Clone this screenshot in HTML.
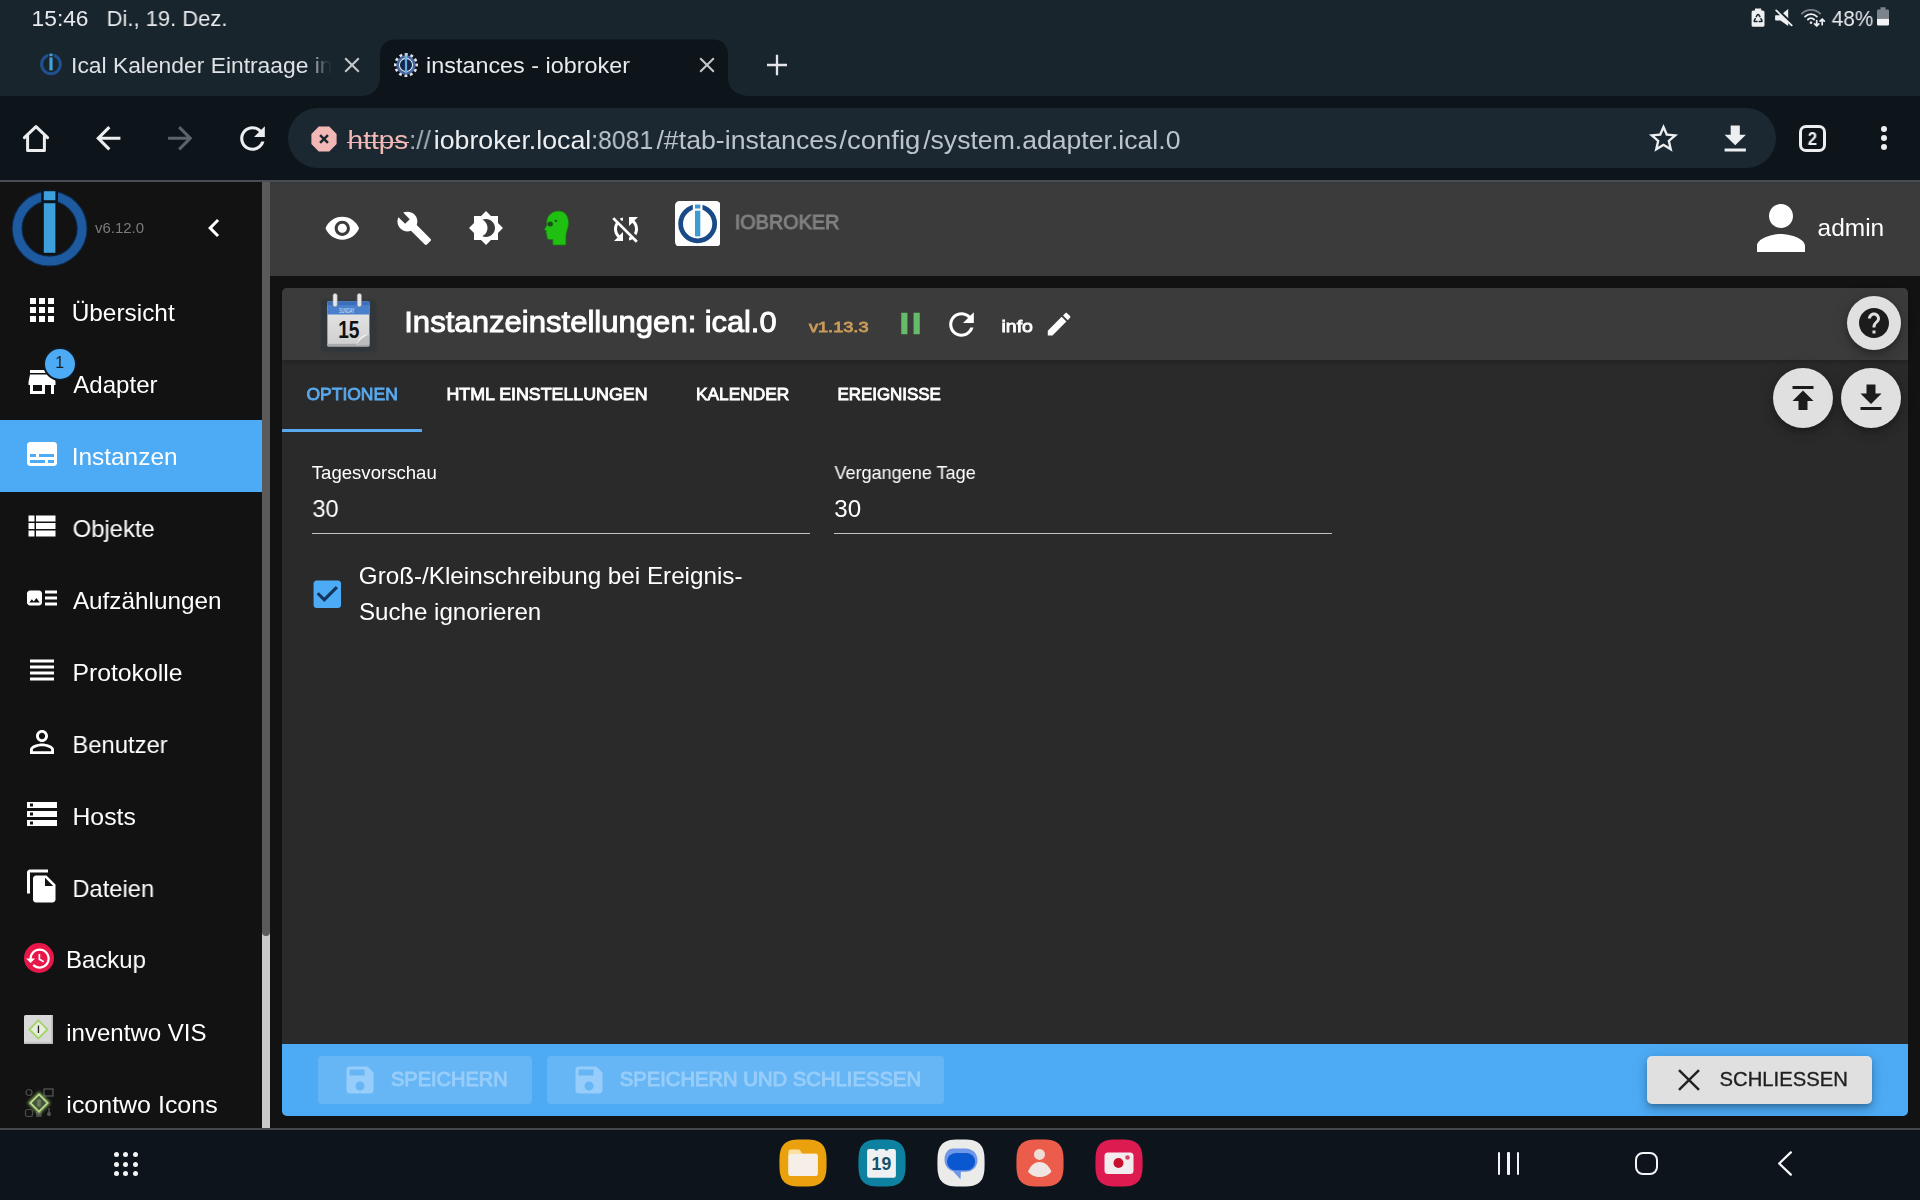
<!DOCTYPE html>
<html lang="de"><head><meta charset="utf-8"><title>instances - iobroker</title><style>
html,body{margin:0;padding:0;}
body{width:1920px;height:1200px;overflow:hidden;background:#121212;position:relative;font-family:"Liberation Sans",sans-serif;}
.t{position:absolute;white-space:pre;transform-origin:0 0;display:block;will-change:transform;}
.i,.b{position:absolute;display:block;}
</style></head>
<body>
<div class="b" style="left:0px;top:0px;width:1920px;height:96px;background:#19252c;"></div>
<div class="b" style="left:0px;top:96px;width:1920px;height:84px;background:#0d141a;"></div>
<div class="b" style="left:0px;top:180px;width:1920px;height:2px;background:#474d52;"></div>
<span class="t" style="left:31px;top:7.55px;font-size:22.5px;line-height:22.5px;color:#e8eaed;transform:translateX(0.60px) scaleX(1.0103);">15:46</span>
<span class="t" style="left:106px;top:7.55px;font-size:22.5px;line-height:22.5px;color:#e8eaed;transform:translateX(0.64px) scaleX(0.9760);">Di., 19. Dez.</span>
<span class="t" style="left:1831px;top:7.55px;font-size:22.5px;line-height:22.5px;color:#e8eaed;transform:translateX(0.71px) scaleX(0.9238);">48%</span>
<svg class="i" style="left:1875px;top:6px" width="16" height="21" viewBox="0 0 16 21"><path d="M5.5 1.3h5v2.2h2.2a1.3 1.3 0 0 1 1.3 1.3V12.8H2V4.8a1.3 1.3 0 0 1 1.3-1.3H5.5z" fill="#7d838a"/><path d="M2 12.8h12V18.2a1.3 1.3 0 0 1-1.3 1.3H3.3A1.3 1.3 0 0 1 2 18.2z" fill="#f1f3f4"/></svg>
<svg class="i" style="left:1750px;top:7px" width="16" height="21" viewBox="0 0 16 21"><path d="M5 1.400h6.200v2.200h1.700a1.600 1.600 0 0 1 1.600 1.600V18.200a1.600 1.600 0 0 1-1.600 1.600H3.200A1.600 1.600 0 0 1 1.600 18.200V5.200a1.600 1.600 0 0 1 1.600-1.600H5z" fill="#eef0f2"/><path d="M6.300 9.600L7.400 7.800a.85.85 0 0 1 1.400 0L9.900 9.600M5.300 11.700L4.200 13.600a.5.500 0 0 0 .4.800H7M10.900 11.700L12 13.600a.5.500 0 0 1-.4.800H9.200" stroke="#19252c" stroke-width="1.500" fill="none" stroke-linecap="round" stroke-linejoin="round"/></svg>
<svg class="i" style="left:1773px;top:7px" width="21" height="21" viewBox="0 0 21 21"><path d="M2.900 8.300H7.400L15.200 2.100V18.900L7.400 13.600H2.900a.8.800 0 0 1-.8-.8V9.100a.8.800 0 0 1 .8-.8z" fill="#eef0f2"/><path d="M4.500 2.400L20.200 17.600" stroke="#19252c" stroke-width="2.200"/><path d="M3.200 3.400L18.700 18.400" stroke="#eef0f2" stroke-width="1.800" stroke-linecap="round"/></svg>
<svg class="i" style="left:1800px;top:7px" width="26" height="21" viewBox="0 0 26 21" fill="none" stroke-linecap="round"><path d="M1.800 6.700A12.800 12.800 0 0 1 20.200 6.700" stroke="#7d838a" stroke-width="1.800"/><path d="M5.060 9.660A8.400 8.400 0 0 1 16.940 9.660" stroke="#eef0f2" stroke-width="1.800"/><path d="M7.900 12.500A4.400 4.400 0 0 1 14.100 12.500" stroke="#eef0f2" stroke-width="1.800"/><rect x="9.800" y="14.400" width="2.400" height="2.400" rx=".6" fill="#eef0f2"/><path d="M16.700 13.600v5.300m-2.100-2.100l2.100 2.100 2.100-2.100M22.200 17.700v-5.700m-2.100 2.100l2.100-2.100 2.100 2.100" stroke="#eef0f2" stroke-width="1.700" stroke-linejoin="round"/></svg>
<svg class="i" style="left:360px;top:38px" width="392" height="58" viewBox="0 0 392 58"><path d="M0 58 C14 58 20 50 20 38 V18 Q20 1.5 36 1.5 H352 Q368 1.5 368 18 V38 C368 50 374 58 392 58 Z" fill="#0d141a"/></svg>
<svg class="i" style="left:39px;top:52px" width="24" height="24" viewBox="0 0 24 24"><circle cx="12" cy="12.3" r="9.4" fill="none" stroke="#204f8f" stroke-width="3"/><rect x="9.4" y="0.8" width="5.2" height="5.4" fill="#19252c"/><rect x="10.4" y="1.6" width="3.2" height="2.6" fill="#459fd8"/><rect x="10.4" y="5.4" width="3.2" height="13" fill="#459fd8"/></svg>
<span class="t" style="left:71px;top:54.55px;font-size:22.5px;line-height:22.5px;color:#dfe2e5;transform:translateX(0.04px) scaleX(1.0149);-webkit-mask-image:linear-gradient(90deg,#000 0,#000 233px,rgba(0,0,0,.05) 254px);">Ical Kalender Eintraage in</span>
<svg class="i" style="left:342.5px;top:55.599999999999994px" width="18" height="18" viewBox="0 0 18 18"><path d="M2.2 2.2L15.8 15.8M15.8 2.2L2.2 15.8" stroke="#c4c7ca" stroke-width="2.1"/></svg>
<svg class="i" style="left:697.5px;top:55.599999999999994px" width="18" height="18" viewBox="0 0 18 18"><path d="M2.2 2.2L15.8 15.8M15.8 2.2L2.2 15.8" stroke="#c4c7ca" stroke-width="2.1"/></svg>
<svg class="i" style="left:393px;top:52px" width="26" height="26" viewBox="0 0 26 26"><circle cx="13" cy="13" r="10.400" fill="none" stroke="#dde4ee" stroke-width="3.200" stroke-dasharray="2.720 2.725" transform="rotate(-7.500 13 13)"/><circle cx="13" cy="13" r="8.400" fill="#10264a" stroke="#48669a" stroke-width="2.600"/><circle cx="13" cy="13" r="6.600" fill="none" stroke="#dbe6f4" stroke-width="1.100"/><rect x="11.700" y="1.400" width="2.600" height="4" fill="#a9c9e6"/><rect x="11.900" y="4.400" width="2.200" height="16.800" fill="#64abe2"/></svg>
<span class="t" style="left:426px;top:54.55px;font-size:22.5px;line-height:22.5px;color:#e8eaed;transform:translateX(0.05px) scaleX(1.0388);">instances - iobroker</span>
<svg class="i" style="left:765px;top:52.600px" width="24" height="24" viewBox="0 0 24 24"><path d="M12 1.800V22.200M2 12H22" stroke="#e3e5e8" stroke-width="2.300"/></svg>
<svg class="i" style="left:18px;top:120px" width="36" height="36" viewBox="0 0 36 36"><path d="M6.4 17.6L18 6.6 29.6 17.6M9.6 15.4V30.4H26.4V15.4" fill="none" stroke="#eceef0" stroke-width="3" stroke-linejoin="round" stroke-linecap="round"/></svg>
<svg class="i" style="left:89.75px;top:119.75px;" width="36.5" height="36.5" viewBox="0 0 24 24" fill="#eceef0"><path d="M20 11H7.83l5.59-5.59L12 4l-8 8 8 8 1.41-1.41L7.83 13H20v-2z"/></svg>
<svg class="i" style="left:161.75px;top:119.75px;" width="36.5" height="36.5" viewBox="0 0 24 24" fill="#5c636b"><path d="M12 4l-1.41 1.41L16.17 11H4v2h12.17l-5.58 5.59L12 20l8-8z"/></svg>
<svg class="i" style="left:233.80px;top:120.10px;" width="37" height="37" viewBox="0 0 24 24" fill="#eceef0"><path d="M17.65 6.35C16.2 4.9 14.21 4 12 4c-4.42 0-7.99 3.58-7.99 8s3.57 8 7.99 8c3.73 0 6.84-2.55 7.73-6h-2.08c-.82 2.33-3.04 4-5.65 4-3.31 0-6-2.69-6-6s2.69-6 6-6c1.66 0 3.14.69 4.22 1.78L13 11h7V4l-2.35 2.35z"/></svg>
<div class="b" style="left:288px;top:108px;width:1488px;height:60px;background:#1b2831;border-radius:30px;"></div>
<svg class="i" style="left:311px;top:125.500px" width="26" height="26" viewBox="0 0 27 27"><path d="M8.6 1.2H18.4L25.8 8.6V18.4L18.4 25.8H8.6L1.2 18.4V8.6Z" fill="#f2b8b5" stroke="#f2b8b5" stroke-width="1.6" stroke-linejoin="round"/><path d="M9.4 9.4L17.6 17.6M17.6 9.4L9.4 17.6" stroke="#1b2831" stroke-width="2.6"/></svg>
<span class="t" style="left:347px;top:127.05px;font-size:26.5px;line-height:26.5px;color:#f2b8b5;transform:translateX(0.58px) scaleX(1.0548);">https</span>
<div class="b" style="left:347.4px;top:141.6px;width:61.4px;height:1.8px;background:#f2b8b5;"></div>
<span class="t" style="left:409px;top:127.05px;font-size:26.5px;line-height:26.5px;color:#a9afb5;transform:translateX(0.08px) scaleX(0.9822);">://</span>
<span class="t" style="left:433px;top:127.05px;font-size:26.5px;line-height:26.5px;color:#eceef0;transform:translateX(0.71px) scaleX(1.0089);">iobroker.local</span>
<span class="t" style="left:591px;top:127.05px;font-size:26.5px;line-height:26.5px;color:#bcc3ca;transform:translateX(0.20px) scaleX(0.9373);">:8081</span>
<span class="t" style="left:656px;top:127.05px;font-size:26.5px;line-height:26.5px;color:#bcc3ca;transform:translateX(0.46px) scaleX(1.0071);">/#tab-instances</span>
<span class="t" style="left:839px;top:127.05px;font-size:26.5px;line-height:26.5px;color:#bcc3ca;transform:translateX(0.36px) scaleX(1.0373);">/config</span>
<span class="t" style="left:923px;top:127.05px;font-size:26.5px;line-height:26.5px;color:#bcc3ca;transform:translateX(0.16px) scaleX(1.0038);">/system.adapter.ical.0</span>
<svg class="i" style="left:1645.50px;top:121.10px;" width="35" height="35" viewBox="0 0 24 24" fill="#eceef0"><path d="M22 9.24l-7.19-.62L12 2 9.19 8.63 2 9.24l5.46 4.73L5.82 21 12 17.27 18.18 21l-1.63-7.03L22 9.24zM12 15.4l-3.76 2.27 1-4.28-3.32-2.88 4.38-.38L12 6.1l1.71 4.04 4.38.38-3.32 2.88 1 4.28L12 15.4z"/></svg>
<svg class="i" style="left:1716.75px;top:121.05px;" width="36.5" height="36.5" viewBox="0 0 24 24" fill="#eceef0"><path d="M19 9h-4V3H9v6H5l7 7 7-7zM5 18v2h14v-2H5z"/></svg>
<div class="b" style="left:1799px;top:125px;width:21px;height:21px;border:3px solid #eceef0;border-radius:7px;"></div>
<span class="t" style="left:1807px;top:130.55px;font-size:17.5px;line-height:17.5px;color:#eceef0;transform:translateX(0.73px) scaleX(0.9648);font-weight:bold;">2</span>
<div class="b" style="left:1880.8px;top:125.8px;width:6.4px;height:6.4px;border-radius:50%;background:#eceef0;"></div>
<div class="b" style="left:1880.8px;top:135.0px;width:6.4px;height:6.4px;border-radius:50%;background:#eceef0;"></div>
<div class="b" style="left:1880.8px;top:144.10000000000002px;width:6.4px;height:6.4px;border-radius:50%;background:#eceef0;"></div>
<div class="b" style="left:0px;top:182px;width:262px;height:946px;background:#121212;"></div>
<div class="b" style="left:262px;top:182px;width:7.7px;height:946px;background:#c9c9c9;"></div>
<div class="b" style="left:262px;top:182px;width:7.7px;height:754px;background:#5a5a5a;border-radius:0 0 4px 4px;"></div>
<svg class="i" style="left:9px;top:188px" width="82" height="82" viewBox="0 0 82 82"><circle cx="40.600" cy="40.600" r="32.500" fill="none" stroke="#0d2a4e" stroke-width="11"/><circle cx="40.600" cy="40.600" r="32.500" fill="none" stroke="#1e5a9f" stroke-width="8.800"/><rect x="32.200" y="1" width="16.800" height="15.400" fill="#0c141c"/><rect x="34.8" y="3.2" width="11.6" height="9" fill="#3d9fdc"/><rect x="34.8" y="15.2" width="11.6" height="49.6" fill="#3d9fdc"/></svg>
<span class="t" style="left:95px;top:220.90px;font-size:14.8px;line-height:14.8px;color:#7b7b7b;transform:translateX(0.01px) scaleX(1.0098);">v6.12.0</span>
<svg class="i" style="left:196.00px;top:210.00px;" width="36" height="36" viewBox="0 0 24 24" fill="#ffffff"><path d="M15.41 7.41L14 6l-6 6 6 6 1.41-1.41L10.83 12z"/></svg>
<div class="b" style="left:0px;top:420px;width:262px;height:72px;background:#4dabf5;"></div>
<svg class="i" style="left:24.00px;top:292.00px;" width="36" height="36" viewBox="0 0 24 24" fill="#ffffff"><path d="M4 8h4V4H4v4zm6 12h4v-4h-4v4zm-6 0h4v-4H4v4zm0-6h4v-4H4v4zm6 0h4v-4h-4v4zm6-10v4h4V4h-4zm-6 4h4V4h-4v4zm6 6h4v-4h-4v4zm0 6h4v-4h-4v4z"/></svg>
<span class="t" style="left:71px;top:300.80px;font-size:24px;line-height:24px;color:#ffffff;transform:translateX(0.68px) scaleX(1.0160);">Übersicht</span>
<svg class="i" style="left:24.00px;top:364.00px;" width="36" height="36" viewBox="0 0 24 24" fill="#ffffff"><path d="M20 4H4v2h16V4zm1 10v-2l-1-5H4l-1 5v2h1v6h10v-6h4v6h2v-6h1zm-9 4H6v-4h6v4z"/></svg>
<span class="t" style="left:73px;top:372.80px;font-size:24px;line-height:24px;color:#ffffff;transform:translateX(0.25px) scaleX(1.0033);">Adapter</span>
<svg class="i" style="left:24.00px;top:436.00px;" width="36" height="36" viewBox="0 0 24 24" fill="#ffffff"><path d="M20 4H4c-1.1 0-2 .9-2 2v12c0 1.1.9 2 2 2h16c1.1 0 2-.9 2-2V6c0-1.1-.9-2-2-2zM4 12h4v2H4v-2zm10 6H4v-2h10v2zm6 0h-4v-2h4v2zm0-4H10v-2h10v2z"/></svg>
<span class="t" style="left:71px;top:444.80px;font-size:24px;line-height:24px;color:#ffffff;transform:translateX(0.69px) scaleX(1.0172);">Instanzen</span>
<svg class="i" style="left:24.00px;top:508.00px;" width="36" height="36" viewBox="0 0 24 24" fill="#ffffff"><path d="M3 14h4v-4H3v4zm0 5h4v-4H3v4zM3 9h4V5H3v4zm5 5h13v-4H8v4zm0 5h13v-4H8v4zM8 5v4h13V5H8z"/></svg>
<span class="t" style="left:72px;top:516.80px;font-size:24px;line-height:24px;color:#ffffff;transform:translateX(0.62px) scaleX(0.9935);">Objekte</span>
<svg class="i" style="left:24.00px;top:580.00px;" width="36" height="36" viewBox="0 0 24 24" fill="#ffffff"><path d="M22 13h-8v-2h8v2zm0-6h-8v2h8V7zm-8 10h8v-2h-8v2zm-2-8v6c0 1.1-.9 2-2 2H4c-1.1 0-2-.9-2-2V9c0-1.1.9-2 2-2h6c1.1 0 2 .9 2 2zm-1.5 6l-2.25-3-1.75 2.26-1.25-1.51L3.5 15h7z"/></svg>
<span class="t" style="left:72px;top:588.80px;font-size:24px;line-height:24px;color:#ffffff;transform:translateX(0.91px) scaleX(1.0116);">Aufzählungen</span>
<svg class="i" style="left:24.00px;top:652.00px;" width="36" height="36" viewBox="0 0 24 24" fill="#ffffff"><path d="M4 15h16v-2H4v2zm0 4h16v-2H4v2zm0-8h16V9H4v2zm0-6v2h16V5H4z"/></svg>
<span class="t" style="left:72px;top:660.80px;font-size:24px;line-height:24px;color:#ffffff;transform:translateX(0.48px) scaleX(1.0306);">Protokolle</span>
<svg class="i" style="left:24.00px;top:724.00px;" width="36" height="36" viewBox="0 0 24 24" fill="#ffffff"><path d="M12 5.9c1.16 0 2.1.94 2.1 2.1s-.94 2.1-2.1 2.1S9.9 9.16 9.9 8s.94-2.1 2.1-2.1m0 9c2.97 0 6.1 1.46 6.1 2.1v1.1H5.9V17c0-.64 3.13-2.1 6.1-2.1M12 4C9.79 4 8 5.79 8 8s1.79 4 4 4 4-1.79 4-4-1.79-4-4-4zm0 9c-2.67 0-8 1.34-8 4v3h16v-3c0-2.66-5.33-4-8-4z"/></svg>
<span class="t" style="left:72px;top:732.80px;font-size:24px;line-height:24px;color:#ffffff;transform:translateX(0.41px) scaleX(0.9918);">Benutzer</span>
<svg class="i" style="left:24.00px;top:796.00px;" width="36" height="36" viewBox="0 0 24 24" fill="#ffffff"><path d="M2 20h20v-4H2v4zm2-3h2v2H4v-2zM2 4v4h20V4H2zm4 3H4V5h2v2zm-4 7h20v-4H2v4zm2-3h2v2H4v-2z"/></svg>
<span class="t" style="left:72px;top:804.80px;font-size:24px;line-height:24px;color:#ffffff;transform:translateX(0.46px) scaleX(1.0326);">Hosts</span>
<svg class="i" style="left:24.00px;top:868.00px;" width="36" height="36" viewBox="0 0 24 24" fill="#ffffff"><path d="M16 1H4c-1.1 0-2 .9-2 2v14h2V3h12V1zm-1 4l6 6v10c0 1.1-.9 2-2 2H7.99C6.89 23 6 22.1 6 21l.01-14c0-1.1.89-2 1.99-2h7zm-1 7h5.5L14 6.5V12z"/></svg>
<span class="t" style="left:72px;top:876.80px;font-size:24px;line-height:24px;color:#ffffff;transform:translateX(0.42px) scaleX(0.9868);">Dateien</span>
<div class="b" style="left:44.8px;top:349px;width:30px;height:30px;border-radius:50%;background:#4dabf5;box-shadow:0 0 0 2px #101820;"></div>
<span class="t" style="left:55px;top:354.50px;font-size:16.6px;line-height:16.6px;color:#14202b;transform:translateX(0.24px) scaleX(0.9512);">1</span>
<div class="b" style="left:24px;top:943px;width:30px;height:30px;border-radius:50%;background:#e8174a;"></div>
<svg class="i" style="left:24.90px;top:944.50px;" width="27" height="27" viewBox="0 0 24 24" fill="#ffffff"><path d="M13 3c-4.97 0-9 4.03-9 9H1l3.89 3.89.07.14L9 12H6c0-3.87 3.13-7 7-7s7 3.13 7 7-3.13 7-7 7c-1.93 0-3.68-.79-4.94-2.06l-1.42 1.42C8.27 19.99 10.51 21 13 21c4.97 0 9-4.03 9-9s-4.03-9-9-9zm-1 5v5l4.28 2.54.72-1.21-3.5-2.08V8H12z"/></svg>
<span class="t" style="left:65px;top:947.80px;font-size:24px;line-height:24px;color:#ffffff;transform:translateX(0.96px) scaleX(0.9987);">Backup</span>
<svg class="i" style="left:24px;top:1015px" width="29" height="29" viewBox="0 0 29 29"><rect width="29" height="29" rx="1.5" fill="#d9d9d9"/><rect x="27.4" width="1.6" height="29" fill="#b9b9b9"/><rect y="27.4" width="29" height="1.6" fill="#b9b9b9"/><path d="M14.4 5.4L23.4 14.4 14.4 23.4 5.4 14.4Z" fill="#e6eedb" stroke="#a6d36d" stroke-width="2"/><rect x="13.8" y="10.6" width="1.3" height="7.4" fill="#222"/></svg>
<span class="t" style="left:66px;top:1020.80px;font-size:24px;line-height:24px;color:#ffffff;transform:translateX(0.23px) scaleX(1.0017);">inventwo VIS</span>
<svg class="i" style="left:24px;top:1088px" width="30" height="30" viewBox="0 0 30 30"><defs><filter id="gl" x="-30%" y="-30%" width="160%" height="160%"><feGaussianBlur stdDeviation="1.500"/></filter></defs><rect x="20" y="1" width="9" height="7" fill="none" stroke="#5a5a5a" stroke-width="1.200"/><circle cx="5" cy="4.500" r="3" fill="none" stroke="#4c4c4c" stroke-width="1.200"/><rect x="1.500" y="21.500" width="7" height="7" rx="2" fill="none" stroke="#4c4c4c" stroke-width="1.200"/><rect x="12" y="24" width="5.600" height="5" fill="#444"/><circle cx="25" cy="26" r="2" fill="#555"/><rect x="24.300" y="20" width="1.400" height="5" fill="#555"/><path d="M15 3.400L26.600 15 15 26.600 3.400 15Z" fill="#8fb060" filter="url(#gl)" opacity=".9"/><path d="M15 6.400L23.600 15 15 23.600 6.400 15Z" fill="#46543a" stroke="#b5d98a" stroke-width="1.800"/><rect x="13.200" y="11.400" width="3.600" height="7.200" fill="#6f7d64"/></svg>
<span class="t" style="left:66px;top:1092.80px;font-size:24px;line-height:24px;color:#ffffff;transform:translateX(0.34px) scaleX(1.0404);">icontwo Icons</span>
<div class="b" style="left:270px;top:182px;width:1650px;height:94px;background:#3b3b3b;"></div>
<div class="b" style="left:270px;top:276px;width:1650px;height:852px;background:#121212;"></div>
<div class="b" style="left:270px;top:182px;width:1650px;height:2.4px;background:linear-gradient(#33383c,#3b3b3b);"></div>
<svg class="i" style="left:323.50px;top:209.50px;" width="36.6" height="36.6" viewBox="0 0 24 24" fill="#ffffff"><path d="M12 4.5C7 4.5 2.73 7.61 1 12c1.73 4.39 6 7.5 11 7.5s9.27-3.11 11-7.5c-1.73-4.39-6-7.5-11-7.5zM12 17c-2.76 0-5-2.24-5-5s2.24-5 5-5 5 2.24 5 5-2.24 5-5 5zm0-8c-1.66 0-3 1.34-3 3s1.34 3 3 3 3-1.34 3-3-1.34-3-3-3z"/></svg>
<svg class="i" style="left:395.50px;top:209.50px;" width="36.6" height="36.6" viewBox="0 0 24 24" fill="#ffffff"><path d="M22.7 19l-9.1-9.1c.9-2.3.4-5-1.5-6.9-2-2-5-2.4-7.4-1.3L9 6 6 9 1.6 4.7C.4 7.1.9 10.1 2.9 12.1c1.9 1.9 4.6 2.4 6.9 1.5l9.1 9.1c.4.4 1 .4 1.4 0l2.3-2.3c.5-.4.5-1.1.1-1.4z"/></svg>
<svg class="i" style="left:467.90px;top:209.80px;" width="36" height="36" viewBox="0 0 24 24" fill="#ffffff"><path d="M20 8.69V4h-4.69L12 .69 8.69 4H4v4.69L.69 12 4 15.31V20h4.69L12 23.31 15.31 20H20v-4.69L23.31 12 20 8.69zM12 18c-.89 0-1.74-.2-2.5-.55C11.56 16.5 13 14.42 13 12s-1.44-4.5-3.5-5.45C10.26 6.2 11.11 6 12 6c3.31 0 6 2.69 6 6s-2.69 6-6 6z"/></svg>
<svg class="i" style="left:541px;top:209px" width="32" height="38" viewBox="0 0 32 38"><path d="M17.500 2C23.500 2 27.500 6.500 27.500 13.500C27.500 19 25.500 22 25 26C24.800 29 24.900 33 24.900 36H11.900V30.500C9.500 30.800 7 30.500 6.300 29.500C5.800 28.600 6.200 27.400 6 26.400L5.200 25.600 5.800 24.400 5 23.600 5.600 22.400 3.600 20.600C3.400 19.600 5.400 17.800 6 16C5.600 13 5.600 11 6.600 9C8.400 5 12.500 2 17.500 2Z" fill="#1fc012" stroke="#15800e" stroke-width=".7"/><ellipse cx="9.200" cy="15" rx="2.700" ry="2.500" fill="#1d4d18"/><ellipse cx="14.900" cy="11.800" rx="1.500" ry="1.100" fill="#0f5a0c"/></svg>
<svg class="i" style="left:608.00px;top:210.80px;" width="36" height="36" viewBox="0 0 24 24" fill="#ffffff"><path d="M10 6.35V4.26c-.8.21-1.55.54-2.23.96l1.46 1.46c.25-.12.5-.24.77-.33zm-7.14-.94l2.36 2.36C4.45 8.99 4 10.44 4 12c0 2.21.91 4.2 2.36 5.64L4 20h6v-6l-2.24 2.24C6.68 15.15 6 13.66 6 12c0-1 .25-1.94.68-2.77l8.08 8.08c-.25.13-.5.25-.77.34v2.09c.8-.21 1.55-.54 2.23-.96l2.36 2.36 1.27-1.27L4.14 4.14 2.86 5.41zM20 4h-6v6l2.24-2.24C17.32 8.85 18 10.34 18 12c0 1-.25 1.94-.68 2.77l1.46 1.46C19.55 15.01 20 13.56 20 12c0-2.21-.91-4.2-2.36-5.64L20 4z"/></svg>
<svg class="i" style="left:674.700px;top:200.700px" width="45.500" height="45.500" viewBox="0 0 46 46"><rect width="46" height="46" rx="4.5" fill="#fdfdfd"/><circle cx="22.900" cy="23" r="17.200" fill="none" stroke="#174a86" stroke-width="4.800"/><rect x="18" y="2" width="9.800" height="8" fill="#fdfdfd"/><rect x="20.200" y="3.600" width="5.400" height="4" fill="#3d9bd4"/><rect x="18.800" y="9.200" width="8.200" height="27.400" fill="#ffffff"/><rect x="20.200" y="9.800" width="5.400" height="26" fill="#3d9bd4"/></svg>
<span class="t" style="left:734px;top:212.20px;font-size:20.2px;line-height:20.2px;color:#808080;transform:translateX(0.83px) scaleX(0.9808);-webkit-text-stroke:1.0px #808080;">IOBROKER</span>
<svg class="i" style="left:1745.00px;top:192.00px;" width="72" height="72" viewBox="0 0 24 24" fill="#ffffff"><path d="M12 12c2.21 0 4-1.79 4-4s-1.79-4-4-4-4 1.79-4 4 1.79 4 4 4zm0 2c-2.67 0-8 1.34-8 4v2h16v-2c0-2.66-5.33-4-8-4z"/></svg>
<span class="t" style="left:1817px;top:215.60px;font-size:24.4px;line-height:24.4px;color:#ffffff;transform:translateX(0.57px) scaleX(1.0030);">admin</span>
<div class="b" style="left:282px;top:288px;width:1626px;height:828px;background:#2a2a2a;border-radius:5px;"></div>
<div class="b" style="left:282px;top:288px;width:1626px;height:72px;background:#3b3b3b;border-radius:5px 5px 0 0;box-shadow:0 2px 4px rgba(0,0,0,.22);"></div>
<div class="b" style="left:322px;top:300.5px;width:53px;height:50.5px;background:#31363b;border-radius:3px;box-shadow:0 0 2.500px 1px #31363b;"></div>
<svg class="i" style="left:325.900px;top:292.300px" width="44.600" height="56.200" viewBox="0 0 46 57" preserveAspectRatio="none"><defs><linearGradient id="cg" x1="0" y1="0" x2="0" y2="1"><stop offset="0" stop-color="#e9e9e9"/><stop offset="1" stop-color="#cfcfcf"/></linearGradient></defs><rect x="1.400" y="9.600" width="43.400" height="45.600" rx="1.500" fill="url(#cg)"/><rect x="1.400" y="52.600" width="43.400" height="2.600" fill="#a9a9a9"/><path d="M1.400 11.100a1.500 1.500 0 0 1 1.500-1.500h40.400a1.500 1.500 0 0 1 1.500 1.500v11.700H1.400z" fill="#4a7fcb"/><rect x="1.400" y="9.600" width="43.400" height="3.600" fill="#3c6db8"/><path d="M31 54.200C33 47 38 43 44.800 42.600V52a1.500 1.500 0 0 1-1.500 1.500z" fill="#bdbdbd"/><path d="M31 54.200C34 49 38 45.800 44.800 42.600 39 43 34 45 31 54.200z" fill="#f2f2f2"/><rect x="7.200" y="1.400" width="4.400" height="13.600" rx="2.200" fill="#e8e8e8" stroke="#8c8c8c" stroke-width=".6"/><rect x="32.200" y="1.400" width="4.400" height="13.600" rx="2.200" fill="#e8e8e8" stroke="#8c8c8c" stroke-width=".6"/><text x="21.400" y="21" font-family="Liberation Sans" font-size="7.400" fill="#d9e6f7" text-anchor="middle" textLength="16" lengthAdjust="spacingAndGlyphs">SUNDAY</text><text x="23.600" y="46.400" font-family="Liberation Sans" font-weight="bold" font-size="24" fill="#111" text-anchor="middle" textLength="22" lengthAdjust="spacingAndGlyphs">15</text></svg>
<span class="t" style="left:404px;top:307.05px;font-size:29.5px;line-height:29.5px;color:#ffffff;transform:translateX(0.23px) scaleX(1.0539);-webkit-text-stroke:0.95px #ffffff;">Instanzeinstellungen:</span>
<span class="t" style="left:704px;top:307.05px;font-size:29.5px;line-height:29.5px;color:#ffffff;transform:translateX(0.68px) scaleX(1.0427);-webkit-text-stroke:0.95px #ffffff;">ical.0</span>
<span class="t" style="left:808px;top:319.20px;font-size:15.2px;line-height:15.2px;color:#c99b5a;transform:translateX(0.90px) scaleX(1.1968);-webkit-text-stroke:0.8px #c99b5a;">v1.13.3</span>
<svg class="i" style="left:891.70px;top:305.30px;" width="37" height="37" viewBox="0 0 24 24" fill="#66bb6a"><path d="M6 19h4V5H6v14zm8-14v14h4V5h-4z"/></svg>
<svg class="i" style="left:942.70px;top:305.50px;" width="37" height="37" viewBox="0 0 24 24" fill="#ffffff"><path d="M17.65 6.35C16.2 4.9 14.21 4 12 4c-4.42 0-7.99 3.58-7.99 8s3.57 8 7.99 8c3.73 0 6.84-2.55 7.73-6h-2.08c-.82 2.33-3.04 4-5.65 4-3.31 0-6-2.69-6-6s2.69-6 6-6c1.66 0 3.14.69 4.22 1.78L13 11h7V4l-2.35 2.35z"/></svg>
<span class="t" style="left:1001px;top:317.60px;font-size:17.4px;line-height:17.4px;color:#ffffff;transform:translateX(0.42px) scaleX(1.1261);-webkit-text-stroke:0.85px #ffffff;">info</span>
<svg class="i" style="left:1044.00px;top:309.20px;" width="30.2" height="30.2" viewBox="0 0 24 24" fill="#ffffff"><path d="M3 17.25V21h3.75L17.81 9.94l-3.75-3.75L3 17.25zM20.71 7.04c.39-.39.39-1.02 0-1.41l-2.34-2.34c-.39-.39-1.02-.39-1.41 0l-1.83 1.83 3.75 3.75 1.83-1.83z"/></svg>
<div class="b" style="left:1847px;top:296px;width:54px;height:54px;background:#e0e0e0;box-shadow:0 3px 5px -1px rgba(0,0,0,.2),0 6px 10px rgba(0,0,0,.14),0 1px 18px rgba(0,0,0,.12);border-radius:50%;"></div>
<svg class="i" style="left:1856.00px;top:305.00px;" width="36" height="36" viewBox="0 0 24 24" fill="#1c1c1c"><path d="M12 2C6.48 2 2 6.48 2 12s4.48 10 10 10 10-4.48 10-10S17.52 2 12 2zm1 17h-2v-2h2v2zm2.07-7.75l-.9.92C13.45 12.9 13 13.5 13 15h-2v-.5c0-1.1.45-2.1 1.17-2.83l1.24-1.26c.37-.36.59-.86.59-1.41 0-1.1-.9-2-2-2s-2 .9-2 2H8c0-2.21 1.79-4 4-4s4 1.79 4 4c0 .88-.36 1.68-.93 2.25z"/></svg>
<div class="b" style="left:1773px;top:368px;width:60px;height:60px;background:#e0e0e0;box-shadow:0 3px 5px -1px rgba(0,0,0,.2),0 6px 10px rgba(0,0,0,.14),0 1px 18px rgba(0,0,0,.12);border-radius:50%;"></div>
<svg class="i" style="left:1785.00px;top:380.00px;" width="36" height="36" viewBox="0 0 24 24" fill="#1c1c1c"><path d="M5 4v2h14V4H5zm0 10h4v6h6v-6h4l-7-7-7 7z"/></svg>
<div class="b" style="left:1841px;top:368px;width:60px;height:60px;background:#e0e0e0;box-shadow:0 3px 5px -1px rgba(0,0,0,.2),0 6px 10px rgba(0,0,0,.14),0 1px 18px rgba(0,0,0,.12);border-radius:50%;"></div>
<svg class="i" style="left:1853.00px;top:380.00px;" width="36" height="36" viewBox="0 0 24 24" fill="#1c1c1c"><path d="M19 9h-4V3H9v6H5l7 7 7-7zM5 18v2h14v-2H5z"/></svg>
<span class="t" style="left:306px;top:387.35px;font-size:16.9px;line-height:16.9px;color:#5aa9ee;transform:translateX(0.45px) scaleX(1.0353);-webkit-text-stroke:0.85px #5aa9ee;">OPTIONEN</span>
<span class="t" style="left:446px;top:387.35px;font-size:16.9px;line-height:16.9px;color:#ffffff;transform:translateX(0.40px) scaleX(1.0541);-webkit-text-stroke:0.85px #ffffff;">HTML EINSTELLUNGEN</span>
<span class="t" style="left:695px;top:387.35px;font-size:16.9px;line-height:16.9px;color:#ffffff;transform:translateX(0.98px) scaleX(1.0235);-webkit-text-stroke:0.85px #ffffff;">KALENDER</span>
<span class="t" style="left:837px;top:387.35px;font-size:16.9px;line-height:16.9px;color:#ffffff;transform:translateX(0.40px) scaleX(1.0015);-webkit-text-stroke:0.85px #ffffff;">EREIGNISSE</span>
<div class="b" style="left:282px;top:428.5px;width:140px;height:3.5px;background:#5aa9ee;"></div>
<span class="t" style="left:311px;top:463.60px;font-size:18.4px;line-height:18.4px;color:#ffffff;transform:translateX(0.78px) scaleX(1.0104);">Tagesvorschau</span>
<span class="t" style="left:834px;top:463.60px;font-size:18.4px;line-height:18.4px;color:#ffffff;transform:translateX(0.53px) scaleX(0.9806);">Vergangene Tage</span>
<span class="t" style="left:312px;top:496.80px;font-size:24px;line-height:24px;color:#ffffff;transform:translateX(0.44px) scaleX(0.9839);">30</span>
<span class="t" style="left:834px;top:496.80px;font-size:24px;line-height:24px;color:#ffffff;transform:translateX(0.25px) scaleX(1.0068);">30</span>
<div class="b" style="left:312px;top:532.6px;width:498px;height:1.4px;background:#c2c2c2;"></div>
<div class="b" style="left:834px;top:532.6px;width:498px;height:1.4px;background:#c2c2c2;"></div>
<div class="b" style="left:315px;top:582px;width:24px;height:24px;background:#11355c;"></div>
<svg class="i" style="left:308.70px;top:575.70px;" width="36.6" height="36.6" viewBox="0 0 24 24" fill="#4dabf5"><path d="M19 3H5c-1.11 0-2 .9-2 2v14c0 1.1.89 2 2 2h14c1.11 0 2-.9 2-2V5c0-1.1-.89-2-2-2zm-9 14l-5-5 1.41-1.41L10 14.17l7.59-7.59L19 8l-9 9z"/></svg>
<span class="t" style="left:358px;top:563.80px;font-size:24px;line-height:24px;color:#ffffff;transform:translateX(0.79px) scaleX(1.0093);">Groß-/Kleinschreibung bei Ereignis-</span>
<span class="t" style="left:358px;top:599.80px;font-size:24px;line-height:24px;color:#ffffff;transform:translateX(0.96px) scaleX(1.0048);">Suche ignorieren</span>
<div class="b" style="left:282px;top:1044px;width:1626px;height:72px;background:#4dabf5;border-radius:0 0 5px 5px;"></div>
<div class="b" style="left:318px;top:1056px;width:214px;height:48px;background:#66b5f5;border-radius:4px;"></div>
<svg class="i" style="left:341.80px;top:1062.30px;" width="36" height="36" viewBox="0 0 24 24" fill="#97cdfa"><path d="M17 3H5c-1.11 0-2 .9-2 2v14c0 1.1.89 2 2 2h14c1.1 0 2-.9 2-2V7l-4-4zm-5 16c-1.66 0-3-1.34-3-3s1.34-3 3-3 3 1.34 3 3-1.34 3-3 3zm3-10H5V5h10v4z"/></svg>
<span class="t" style="left:390px;top:1069.55px;font-size:19.5px;line-height:19.5px;color:#97cdfa;transform:translateX(0.98px) scaleX(1.0250);-webkit-text-stroke:0.95px #97cdfa;">SPEICHERN</span>
<div class="b" style="left:547px;top:1056px;width:397px;height:48px;background:#66b5f5;border-radius:4px;"></div>
<svg class="i" style="left:571.00px;top:1062.30px;" width="36" height="36" viewBox="0 0 24 24" fill="#97cdfa"><path d="M17 3H5c-1.11 0-2 .9-2 2v14c0 1.1.89 2 2 2h14c1.1 0 2-.9 2-2V7l-4-4zm-5 16c-1.66 0-3-1.34-3-3s1.34-3 3-3 3 1.34 3 3-1.34 3-3 3zm3-10H5V5h10v4z"/></svg>
<span class="t" style="left:619px;top:1069.55px;font-size:19.5px;line-height:19.5px;color:#97cdfa;transform:translateX(0.66px) scaleX(1.0377);-webkit-text-stroke:0.95px #97cdfa;">SPEICHERN UND SCHLIESSEN</span>
<div class="b" style="left:1647px;top:1056px;width:225px;height:48px;background:#e0e0e0;border-radius:5px;box-shadow:0 3px 5px -1px rgba(0,0,0,.2),0 6px 10px rgba(0,0,0,.14),0 1px 18px rgba(0,0,0,.12);"></div>
<svg class="i" style="left:1677px;top:1068px" width="24" height="24" viewBox="0 0 24 24"><path d="M2 2.200L22 21.800M22 2.200L2 21.800" stroke="#222" stroke-width="2.500"/></svg>
<span class="t" style="left:1719px;top:1069.20px;font-size:20.2px;line-height:20.2px;color:#1f1f1f;transform:translateX(0.62px) scaleX(1.0017);-webkit-text-stroke:0.35px #1f1f1f;">SCHLIESSEN</span>
<div class="b" style="left:0px;top:1128px;width:1920px;height:2.4px;background:#44484c;"></div>
<div class="b" style="left:0px;top:1130.2px;width:1920px;height:70px;background:#0d141b;"></div>
<div class="b" style="left:114.10px;top:1152.20px;width:5px;height:5px;border-radius:50%;background:#f4f5f6;"></div>
<div class="b" style="left:114.10px;top:1161.55px;width:5px;height:5px;border-radius:50%;background:#f4f5f6;"></div>
<div class="b" style="left:114.10px;top:1170.90px;width:5px;height:5px;border-radius:50%;background:#f4f5f6;"></div>
<div class="b" style="left:123.45px;top:1152.20px;width:5px;height:5px;border-radius:50%;background:#f4f5f6;"></div>
<div class="b" style="left:123.45px;top:1161.55px;width:5px;height:5px;border-radius:50%;background:#f4f5f6;"></div>
<div class="b" style="left:123.45px;top:1170.90px;width:5px;height:5px;border-radius:50%;background:#f4f5f6;"></div>
<div class="b" style="left:132.80px;top:1152.20px;width:5px;height:5px;border-radius:50%;background:#f4f5f6;"></div>
<div class="b" style="left:132.80px;top:1161.55px;width:5px;height:5px;border-radius:50%;background:#f4f5f6;"></div>
<div class="b" style="left:132.80px;top:1170.90px;width:5px;height:5px;border-radius:50%;background:#f4f5f6;"></div>
<svg class="i" style="left:778.5px;top:1139.2px" width="48" height="48" viewBox="0 0 48 48"><path d="M47.6 24.0L47.5 29.3L47.3 32.2L46.9 34.6L46.4 36.7L45.8 38.5L45.0 40.2L44.0 41.6L42.9 42.9L41.6 44.0L40.2 45.0L38.5 45.8L36.7 46.4L34.6 46.9L32.2 47.3L29.3 47.5L24.0 47.6L18.7 47.5L15.8 47.3L13.4 46.9L11.3 46.4L9.5 45.8L7.8 45.0L6.4 44.0L5.1 42.9L4.0 41.6L3.0 40.2L2.2 38.5L1.6 36.7L1.1 34.6L0.7 32.2L0.5 29.3L0.4 24.0L0.5 18.7L0.7 15.8L1.1 13.4L1.6 11.3L2.2 9.5L3.0 7.8L4.0 6.4L5.1 5.1L6.4 4.0L7.8 3.0L9.5 2.2L11.3 1.6L13.4 1.1L15.8 0.7L18.7 0.5L24.0 0.4L29.3 0.5L32.2 0.7L34.6 1.1L36.7 1.6L38.5 2.2L40.2 3.0L41.6 4.0L42.9 5.1L44.0 6.4L45.0 7.8L45.8 9.5L46.4 11.3L46.9 13.4L47.3 15.8L47.5 18.7Z" fill="#eba00d"/><path d="M9.400 13a2.400 2.400 0 0 1 2.400-2.400h7.600a2.400 2.400 0 0 1 2 1.100l1.700 2.800H36.400a2.400 2.400 0 0 1 2.400 2.400V34a2.400 2.400 0 0 1-2.400 2.400H11.800A2.400 2.400 0 0 1 9.400 34z" fill="#fbe0a6"/><rect x="9.400" y="15" width="29.400" height="22" rx="2.600" fill="#f5efe8"/></svg>
<svg class="i" style="left:857.8px;top:1139.2px" width="48" height="48" viewBox="0 0 48 48"><path d="M47.6 24.0L47.5 29.3L47.3 32.2L46.9 34.6L46.4 36.7L45.8 38.5L45.0 40.2L44.0 41.6L42.9 42.9L41.6 44.0L40.2 45.0L38.5 45.8L36.7 46.4L34.6 46.9L32.2 47.3L29.3 47.5L24.0 47.6L18.7 47.5L15.8 47.3L13.4 46.9L11.3 46.4L9.5 45.8L7.8 45.0L6.4 44.0L5.1 42.9L4.0 41.6L3.0 40.2L2.2 38.5L1.6 36.7L1.1 34.6L0.7 32.2L0.5 29.3L0.4 24.0L0.5 18.7L0.7 15.8L1.1 13.4L1.6 11.3L2.2 9.5L3.0 7.8L4.0 6.4L5.1 5.1L6.4 4.0L7.8 3.0L9.5 2.2L11.3 1.6L13.4 1.1L15.8 0.7L18.7 0.5L24.0 0.4L29.3 0.5L32.2 0.7L34.6 1.1L36.7 1.6L38.5 2.2L40.2 3.0L41.6 4.0L42.9 5.1L44.0 6.4L45.0 7.8L45.8 9.5L46.4 11.3L46.9 13.4L47.3 15.8L47.5 18.7Z" fill="#0e80a0"/><path d="M11.300 10h4.900a2.300 2.300 0 0 0 4.400 0h5.800a2.300 2.300 0 0 0 4.400 0h4.900a2.200 2.200 0 0 1 2.200 2.200V36.500a2.200 2.200 0 0 1-2.200 2.200H11.300a2.200 2.200 0 0 1-2.200-2.200V12.200a2.200 2.200 0 0 1 2.200-2.200z" fill="#eef0f1"/><text x="23.400" y="30.500" font-family="Liberation Sans" font-weight="bold" font-size="17.500" fill="#17506a" text-anchor="middle" textLength="19.600" lengthAdjust="spacingAndGlyphs">19</text></svg>
<svg class="i" style="left:936.7px;top:1139.2px" width="48" height="48" viewBox="0 0 48 48"><path d="M47.6 24.0L47.5 29.3L47.3 32.2L46.9 34.6L46.4 36.7L45.8 38.5L45.0 40.2L44.0 41.6L42.9 42.9L41.6 44.0L40.2 45.0L38.5 45.8L36.7 46.4L34.6 46.9L32.2 47.3L29.3 47.5L24.0 47.6L18.7 47.5L15.8 47.3L13.4 46.9L11.3 46.4L9.5 45.8L7.8 45.0L6.4 44.0L5.1 42.9L4.0 41.6L3.0 40.2L2.2 38.5L1.6 36.7L1.1 34.6L0.7 32.2L0.5 29.3L0.4 24.0L0.5 18.7L0.7 15.8L1.1 13.4L1.6 11.3L2.2 9.5L3.0 7.8L4.0 6.4L5.1 5.1L6.4 4.0L7.8 3.0L9.5 2.2L11.3 1.6L13.4 1.1L15.8 0.7L18.7 0.5L24.0 0.4L29.3 0.5L32.2 0.7L34.6 1.1L36.7 1.6L38.5 2.2L40.2 3.0L41.6 4.0L42.9 5.1L44.0 6.4L45.0 7.8L45.8 9.5L46.4 11.3L46.9 13.4L47.3 15.8L47.5 18.7Z" fill="#ebebea"/><path d="M16 9.400h12.500c7 0 12 5 12 11.600 0 6.800-5 11.800-12 11.800h-4.600l-.4 7.800-7.400-8.400C10.500 30.500 7.500 26 7.500 20.500c0-6.400 3.600-11.100 8.500-11.100z" fill="#6f97e8"/><rect x="10" y="14.100" width="28.200" height="17.200" rx="8.600" fill="#0b57d0"/></svg>
<svg class="i" style="left:1015.6px;top:1139.2px" width="48" height="48" viewBox="0 0 48 48"><path d="M47.6 24.0L47.5 29.3L47.3 32.2L46.9 34.6L46.4 36.7L45.8 38.5L45.0 40.2L44.0 41.6L42.9 42.9L41.6 44.0L40.2 45.0L38.5 45.8L36.7 46.4L34.6 46.9L32.2 47.3L29.3 47.5L24.0 47.6L18.7 47.5L15.8 47.3L13.4 46.9L11.3 46.4L9.5 45.8L7.8 45.0L6.4 44.0L5.1 42.9L4.0 41.6L3.0 40.2L2.2 38.5L1.6 36.7L1.1 34.6L0.7 32.2L0.5 29.3L0.4 24.0L0.5 18.7L0.7 15.8L1.1 13.4L1.6 11.3L2.2 9.5L3.0 7.8L4.0 6.4L5.1 5.1L6.4 4.0L7.8 3.0L9.5 2.2L11.3 1.6L13.4 1.1L15.8 0.7L18.7 0.5L24.0 0.4L29.3 0.5L32.2 0.7L34.6 1.1L36.7 1.6L38.5 2.2L40.2 3.0L41.6 4.0L42.9 5.1L44.0 6.4L45.0 7.8L45.8 9.5L46.4 11.3L46.9 13.4L47.3 15.8L47.5 18.7Z" fill="#ec5c4a"/><circle cx="23.500" cy="15.400" r="5.500" fill="#efdcd7"/><path d="M12 32.500C15 26 19 23.100 23.600 23.100S32.400 26 35.400 32.500C32.400 36.500 28 38 23.600 38S15 36.500 12 32.500z" fill="#efe6e3"/></svg>
<svg class="i" style="left:1094.6px;top:1139.3px" width="48" height="48" viewBox="0 0 48 48"><path d="M47.6 24.0L47.5 29.3L47.3 32.2L46.9 34.6L46.4 36.7L45.8 38.5L45.0 40.2L44.0 41.6L42.9 42.9L41.6 44.0L40.2 45.0L38.5 45.8L36.7 46.4L34.6 46.9L32.2 47.3L29.3 47.5L24.0 47.6L18.7 47.5L15.8 47.3L13.4 46.9L11.3 46.4L9.5 45.8L7.8 45.0L6.4 44.0L5.1 42.9L4.0 41.6L3.0 40.2L2.2 38.5L1.6 36.7L1.1 34.6L0.7 32.2L0.5 29.3L0.4 24.0L0.5 18.7L0.7 15.8L1.1 13.4L1.6 11.3L2.2 9.5L3.0 7.8L4.0 6.4L5.1 5.1L6.4 4.0L7.8 3.0L9.5 2.2L11.3 1.6L13.4 1.1L15.8 0.7L18.7 0.5L24.0 0.4L29.3 0.5L32.2 0.7L34.6 1.1L36.7 1.6L38.5 2.2L40.2 3.0L41.6 4.0L42.9 5.1L44.0 6.4L45.0 7.8L45.8 9.5L46.4 11.3L46.9 13.4L47.3 15.8L47.5 18.7Z" fill="#de1b50"/><rect x="9.500" y="13.500" width="29" height="21.500" rx="3.500" fill="#f3ecee"/><circle cx="23.500" cy="24" r="5" fill="#c8102e"/><circle cx="32.500" cy="18.500" r="2.300" fill="#d4486a"/></svg>
<div class="b" style="left:1497.8px;top:1152px;width:2.4px;height:23px;background:#f4f5f6;border-radius:1px;"></div>
<div class="b" style="left:1507.3px;top:1152px;width:2.4px;height:23px;background:#f4f5f6;border-radius:1px;"></div>
<div class="b" style="left:1516.8px;top:1152px;width:2.4px;height:23px;background:#f4f5f6;border-radius:1px;"></div>
<div class="b" style="left:1634.500px;top:1151.500px;width:19.500px;height:19.500px;border:2.300px solid #f4f5f6;border-radius:8px;"></div>
<svg class="i" style="left:1774px;top:1148px" width="22" height="31" viewBox="0 0 22 31"><path d="M16.800 4.400L5.200 15.500 16.800 26.600" fill="none" stroke="#f4f5f6" stroke-width="2.300" stroke-linecap="round" stroke-linejoin="round"/></svg>
</body></html>
